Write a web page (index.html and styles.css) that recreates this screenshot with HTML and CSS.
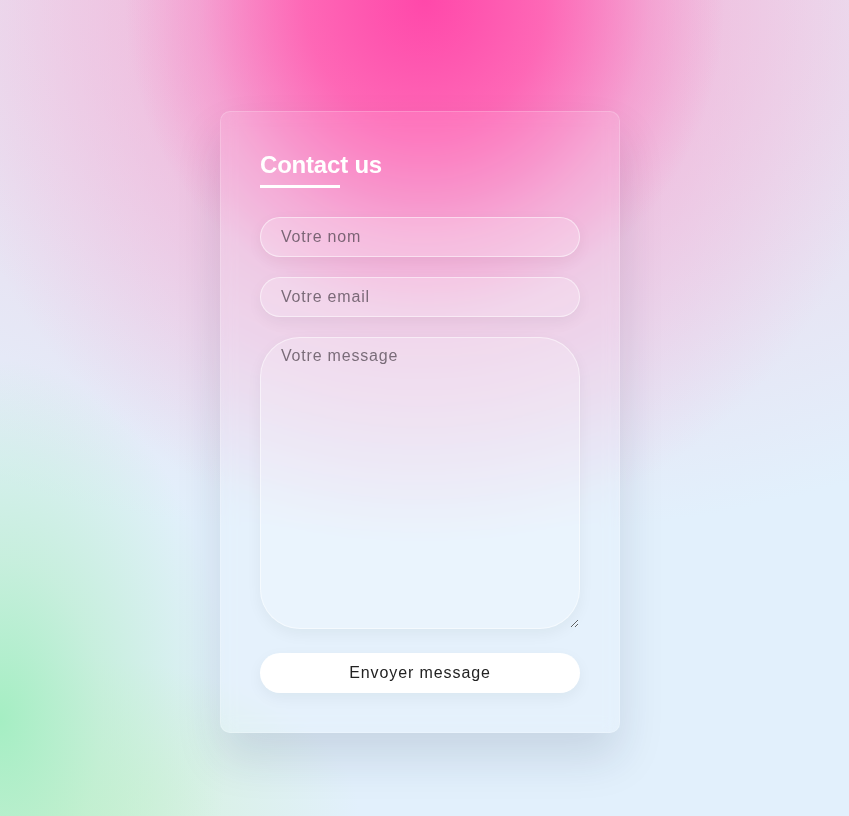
FILE: index.html
```html
<!DOCTYPE html>
<html lang="fr">
<head>
<meta charset="utf-8">
<title>Contact us</title>
<link rel="stylesheet" href="styles.css">
</head>
<body>
<div class="page">
  <form class="card">
    <h2 class="title">Contact us</h2>
    <div class="underline"></div>
    <input class="field" type="text" placeholder="Votre nom">
    <input class="field" type="email" placeholder="Votre email">
    <textarea class="field area" placeholder="Votre message"></textarea>
    <button class="send" type="button">Envoyer message</button>
  </form>
</div>
</body>
</html>
```

FILE: styles.css
```css
html, body {
  margin: 0;
  padding: 0;
  height: 100%;
}
body {
  font-family: "Liberation Sans", Arial, sans-serif;
  background-color: #e2f0fc;
  background-image:
    radial-gradient(ellipse 300px 320px at 425px 0px, rgba(255,72,170,1) 0%, rgba(255,95,178,0.88) 40%, rgba(248,135,198,0.45) 75%, rgba(250,160,210,0) 100%),
    radial-gradient(ellipse 480px 520px at 420px 20px, rgba(248,135,198,0.85) 0%, rgba(242,168,212,0.5) 55%, rgba(240,200,225,0) 100%),
    radial-gradient(ellipse 230px 360px at 0px 720px, rgba(165,238,195,1) 0%, rgba(185,238,205,0.65) 45%, rgba(215,238,230,0) 100%),
    radial-gradient(ellipse 300px 160px at 60px 816px, rgba(205,242,200,0.8) 0%, rgba(215,240,215,0) 100%),
    radial-gradient(ellipse 950px 540px at 424px 0px, rgba(242,205,228,0.95) 0%, rgba(236,218,236,0.55) 65%, rgba(230,230,240,0) 100%);
  background-repeat: no-repeat;
  overflow: hidden;
}
.page {
  padding: 111px 0 0 220px;
}
.card {
  box-sizing: border-box;
  width: 400px;
  padding: 39px;
  border-radius: 10px;
  background: rgba(255,255,255,0.1);
  border: 1px solid rgba(255,255,255,0.2);
  box-shadow: 0 25px 45px rgba(20,40,70,0.13);
  backdrop-filter: blur(8px);
  display: flex;
  flex-direction: column;
  align-items: flex-start;
}
.title {
  margin: 0;
  font-size: 24px;
  line-height: 28px;
  font-weight: 700;
  letter-spacing: -0.2px;
  color: #fff;
}
.underline {
  width: 80px;
  height: 3px;
  margin-top: 6px;
  margin-bottom: 29px;
  background: #fff;
}
.field {
  box-sizing: border-box;
  width: 320px;
  height: 40px;
  margin: 0 0 20px 0;
  padding: 0 20px;
  border: 1px solid rgba(255,255,255,0.5);
  border-radius: 35px;
  background: rgba(255,255,255,0.2);
  box-shadow: 0 5px 15px rgba(0,0,0,0.05);
  font-family: "Liberation Sans", Arial, sans-serif;
  font-size: 16px;
  letter-spacing: 0.8px;
  color: #333;
  outline: none;
}
.field::placeholder {
  color: rgba(70,60,70,0.7);
}
.area {
  height: 292px;
  padding-top: 9px;
  border-radius: 40px;
  margin-bottom: 24px;
  resize: both;
}
.send {
  box-sizing: border-box;
  width: 320px;
  height: 40px;
  border: none;
  border-radius: 35px;
  background: #fff;
  box-shadow: 0 5px 15px rgba(0,0,0,0.05);
  font-family: "Liberation Sans", Arial, sans-serif;
  font-size: 16px;
  letter-spacing: 0.9px;
  color: #222;
  cursor: pointer;
}
```
